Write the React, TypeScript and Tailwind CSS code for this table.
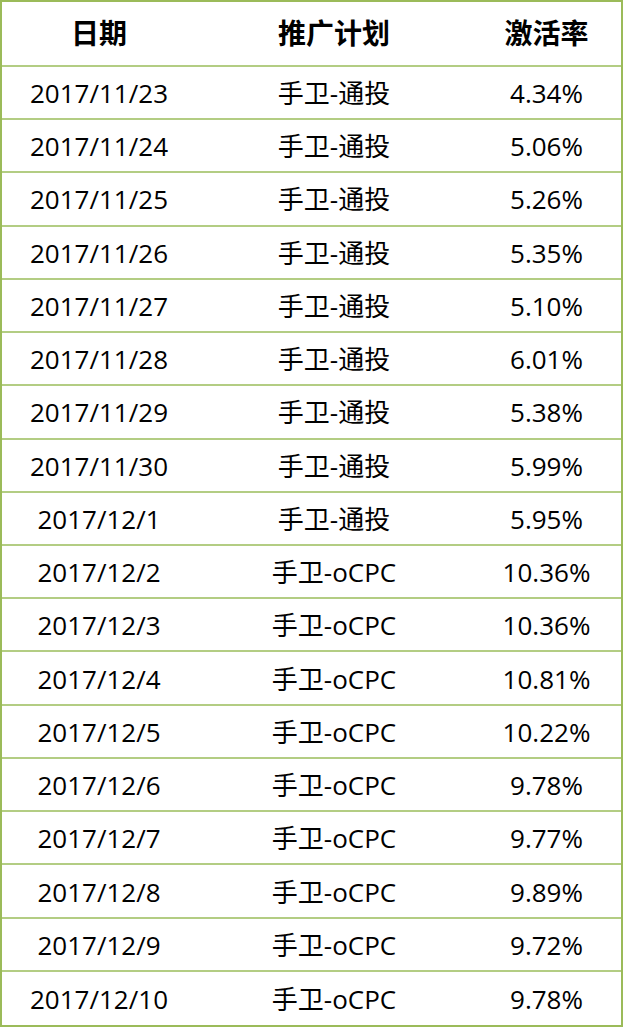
import React from 'react'

const rows: [string, string, string][] = [
  ['2017/11/23', '手卫-通投', '4.34%'],
  ['2017/11/24', '手卫-通投', '5.06%'],
  ['2017/11/25', '手卫-通投', '5.26%'],
  ['2017/11/26', '手卫-通投', '5.35%'],
  ['2017/11/27', '手卫-通投', '5.10%'],
  ['2017/11/28', '手卫-通投', '6.01%'],
  ['2017/11/29', '手卫-通投', '5.38%'],
  ['2017/11/30', '手卫-通投', '5.99%'],
  ['2017/12/1', '手卫-通投', '5.95%'],
  ['2017/12/2', '手卫-oCPC', '10.36%'],
  ['2017/12/3', '手卫-oCPC', '10.36%'],
  ['2017/12/4', '手卫-oCPC', '10.81%'],
  ['2017/12/5', '手卫-oCPC', '10.22%'],
  ['2017/12/6', '手卫-oCPC', '9.78%'],
  ['2017/12/7', '手卫-oCPC', '9.77%'],
  ['2017/12/8', '手卫-oCPC', '9.89%'],
  ['2017/12/9', '手卫-oCPC', '9.72%'],
  ['2017/12/10', '手卫-oCPC', '9.78%'],
]

export default function App() {
  return (
    <div
      className="w-[623px] h-[1029px] bg-white text-black"
      style={{ fontFamily: '"Open Sans", "Noto Sans CJK SC", sans-serif' }}
    >
      <div className="w-[623px] h-[1027px] border-2 border-[#9bbb59] flex flex-col">
        {/* header */}
        <div className="grid grid-cols-[194px_276px_1fr] h-[65px] items-center border-b-2 border-[#b3cd83] text-[28px] font-bold leading-none">
          <div className="text-center">日期</div>
          <div className="text-center">推广计划</div>
          <div className="text-center">激活率</div>
        </div>
        {rows.map(([date, plan, rate], i) => (
          <div
            key={date}
            className={`grid grid-cols-[194px_276px_1fr] h-[53.3px] items-center pt-[1px] text-[26px] leading-none ${
              i < rows.length - 1 ? 'border-b-2 border-[#b3cd83]' : ''
            }`}
          >
            <div className="text-center">{date}</div>
            <div className="text-center">{plan}</div>
            <div className="text-center">{rate}</div>
          </div>
        ))}
      </div>
    </div>
  )
}
